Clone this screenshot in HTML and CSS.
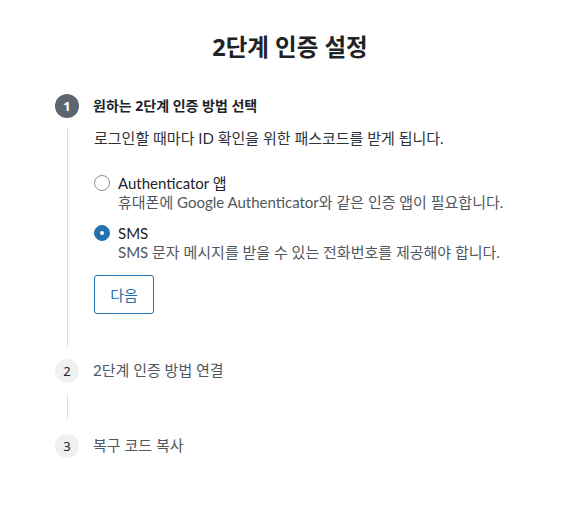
FILE: index.html
```html
<!DOCTYPE html>
<html lang="ko">
<head>
    <meta charset="UTF-8">
    <meta name="viewport" content="width=device-width, initial-scale=1.0">
    <title>2단계 인증 설정</title>
    <link rel="stylesheet" href="styles.css">
</head>
<body>
    <div class="wizard">
        <h1>2단계 인증 설정</h1>

        <div class="step active">
            <div class="stepHead">
                <span class="stepNum">1</span>
                <span class="stepTitle">원하는 2단계 인증 방법 선택</span>
            </div>
            <div class="stepBody">
                <p class="intro">로그인할 때마다 ID 확인을 위한 패스코드를 받게 됩니다.</p>
                <label class="option">
                    <span class="radio"></span>
                    <span class="optText">
                        <span class="optName">Authenticator 앱</span>
                        <span class="optDesc">휴대폰에 Google Authenticator와 같은 인증 앱이 필요합니다.</span>
                    </span>
                </label>
                <label class="option">
                    <span class="radio checked"></span>
                    <span class="optText">
                        <span class="optName">SMS</span>
                        <span class="optDesc">SMS 문자 메시지를 받을 수 있는 전화번호를 제공해야 합니다.</span>
                    </span>
                </label>
                <button class="nextBtn">다음</button>
            </div>
        </div>

        <div class="step">
            <div class="stepHead">
                <span class="stepNum">2</span>
                <span class="stepTitle">2단계 인증 방법 연결</span>
            </div>
            <div class="stepBody empty"></div>
        </div>

        <div class="step">
            <div class="stepHead">
                <span class="stepNum">3</span>
                <span class="stepTitle">복구 코드 복사</span>
            </div>
        </div>
    </div>
</body>
</html>
```

FILE: styles.css
```css
body {
    margin: 0;
    background: #fff;
    color: #1d2327;
    font-family: "Lato", "Noto Sans CJK KR", sans-serif;
    font-size: 15px;
}
.wizard {
    padding: 32px 0 0 55px;
}
h1 {
    margin: 0 62px 32px 0;
    text-align: center;
    font-family: "Noto Sans", "Noto Sans CJK KR", sans-serif;
    font-size: 23.5px;
    line-height: 30px;
    font-weight: 700;
}
.stepHead {
    display: flex;
    align-items: center;
    gap: 14px;
    height: 24px;
}
.stepNum {
    width: 24px;
    height: 24px;
    border-radius: 50%;
    background: #f0f0f1;
    color: #1d2327;
    font-family: "Noto Sans", sans-serif;
    font-size: 13px;
    display: flex;
    align-items: center;
    justify-content: center;
}
.stepTitle {
    color: #50575e;
    line-height: 20px;
    margin-bottom: 2px;
}
.active .stepNum {
    background: #5d6670;
    color: #fff;
    font-weight: 700;
}
.active .stepTitle {
    color: #1d2327;
    font-family: "Noto Sans", "Noto Sans CJK KR", sans-serif;
    font-size: 14px;
    font-weight: 700;
    margin-bottom: 0;
}
.stepBody {
    margin: 12px 0 12px 12px;
    border-left: 1px solid #dcdcde;
    padding: 0 0 33px 26px;
}
.stepBody.empty {
    height: 24px;
    padding: 0;
    margin-bottom: 15px;
}
.intro {
    margin: -1px 0 27px;
    line-height: 18px;
    color: #2c3338;
}
.option {
    display: flex;
    gap: 8px;
    margin-bottom: 13px;
    line-height: 18px;
}
.radio {
    width: 16px;
    height: 16px;
    margin-top: 1px;
    box-sizing: border-box;
    border: 1px solid #8c8f94;
    border-radius: 50%;
    background: #fff;
    flex: none;
    position: relative;
}
.radio.checked {
    background: #2271b1;
    border-color: #2271b1;
}
.radio.checked::after {
    content: "";
    position: absolute;
    left: 5px;
    top: 5px;
    width: 4px;
    height: 4px;
    border-radius: 50%;
    background: #fff;
}
.optText {
    display: flex;
    flex-direction: column;
}
.optName {
    color: #1d2327;
}
.optDesc {
    color: #50575e;
    margin-top: 1px;
}
.nextBtn {
    display: block;
    margin-top: 14px;
    width: 60px;
    height: 39px;
    padding: 0;
    border: 1px solid #2271b1;
    border-radius: 3px;
    background: #fff;
    color: #2271b1;
    font-family: inherit;
    font-size: 15px;
    cursor: pointer;
}
```
